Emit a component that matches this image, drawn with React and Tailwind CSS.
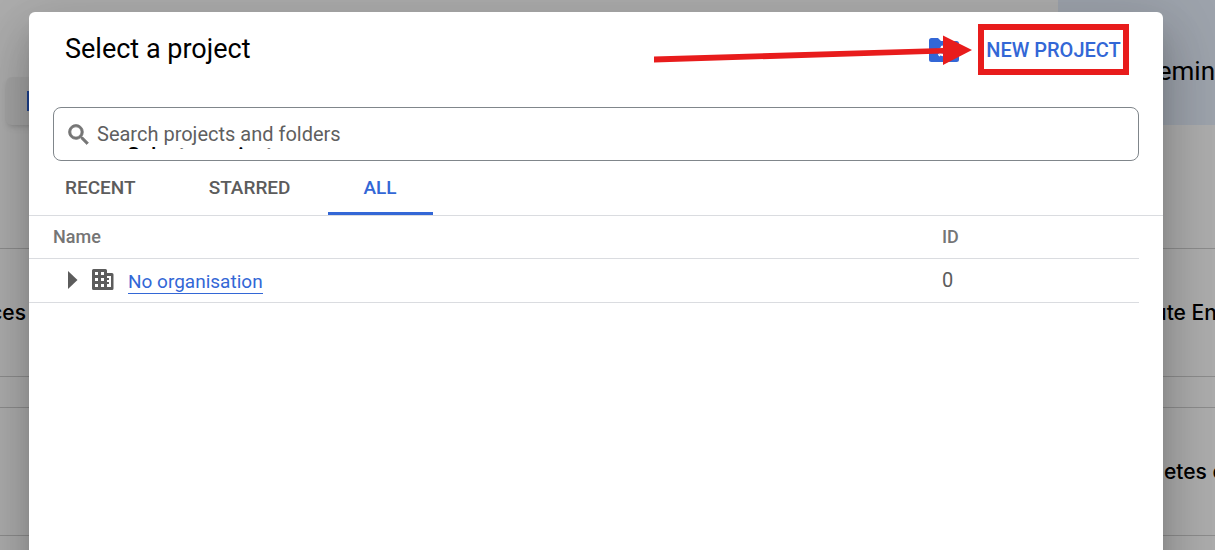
import { useState } from "react";

const tabs = ["RECENT", "STARRED", "ALL"];

const rows = [{ name: "No organisation", id: "0" }];

function ManageIcon() {
    return (
        <svg className="w-[30px] h-6" viewBox="0 0 30 24" aria-hidden="true">
            <path fill="#3367d6" d="M2.500 0H9l3 3h15.500a2.500 2.500 0 0 1 2.500 2.500v16a2.500 2.500 0 0 1-2.500 2.500h-25A2.500 2.500 0 0 1 0 21.500v-19A2.500 2.500 0 0 1 2.500 0z" />
            <circle cx="14" cy="13.500" r="3.500" fill="none" stroke="#fff" strokeWidth="2.500" />
            <circle cx="14" cy="13.500" r="5.200" fill="none" stroke="#fff" strokeWidth="1.500" strokeDasharray="2.400 3.045" />
        </svg>
    );
}

function SearchIcon() {
    return (
        <svg className="w-[21px] h-[21px] shrink-0" viewBox="2.500 2.500 18.500 18.500" fill="#757575" stroke="#757575" strokeWidth="0.700" aria-hidden="true">
            <path d="M15.500 14h-.79l-.28-.27A6.471 6.471 0 0 0 16 9.500 6.500 6.500 0 1 0 9.500 16c1.610 0 3.090-.59 4.230-1.570l.27.28v.79l5 4.990L20.490 19l-4.990-5zm-6 0C7.010 14 5 11.990 5 9.500S7.010 5 9.500 5 14 7.010 14 9.500 11.990 14 9.500 14z" />
        </svg>
    );
}

function OrganisationIcon() {
    return (
        <svg className="w-[22px] h-[22px]" viewBox="0 0 22 22" aria-hidden="true">
            <path fill="#5c5c5c" fillRule="evenodd" d="M1.500 0h12A1.500 1.500 0 0 1 15 1.500V4h5a1.500 1.500 0 0 1 1.500 1.500v14A1.500 1.500 0 0 1 20 21H1.500A1.500 1.500 0 0 1 0 19.500v-18A1.500 1.500 0 0 1 1.500 0zM3 3v3h3V3zM9 3v3h3V3zM3 9v3h3V9zM9 9v3h3V9zM3 15v3h3v-3zM9 15v3h3v-3zM15 7v2h2v2h-2v2h2v2h-2v3h4V7z" />
        </svg>
    );
}

function Card({ left, right, className }) {
    return (
        <div className={`flex justify-between items-center h-[129px] border-y border-[#d0d0d0] text-[21px] font-medium whitespace-nowrap ${className}`}>
            <span className="flex justify-end w-[26px]">{left}</span>
            <span className="flex justify-start w-[61px]">{right}</span>
        </div>
    );
}

function ConsolePage() {
    return (
        <div className="bg-white text-black font-['Inter',sans-serif]">
            <div className="flex justify-between h-[125px]">
                <div className="flex items-center self-end w-40 h-12 ml-[6px] pl-[21px] rounded-md bg-[#f4f4f4] shadow-md">
                    <span className="w-6 h-5 bg-[#2a61d6]" />
                </div>
                <div className="flex items-center justify-end w-[157px] pt-[18px] bg-[#e8f0fe] text-[26px] font-['Roboto',sans-serif]">
                    emin
                </div>
            </div>
            <Card left="ces" right="ute En" className="mt-[123px]" />
            <Card left="" right={<span className="pl-[10px]">etes c</span>} className="mt-[30px]" />
        </div>
    );
}

export default function App() {
    const [active, setActive] = useState("ALL");
    const [query, setQuery] = useState("");

    return (
        <div className="relative h-screen overflow-hidden font-['Roboto',sans-serif]">
            <ConsolePage />

            {/* backdrop and dialog */}
            <div className="absolute inset-0 flex bg-black/32 pt-3 pl-[29px] pr-[52px]">
                <div role="dialog" aria-label="Select a project" className="w-full h-[680px] rounded-md bg-white shadow-[0_14px_20px_-9px_rgba(0,0,0,0.2),0_32px_50px_4px_rgba(0,0,0,0.14),0_12px_61px_10px_rgba(0,0,0,0.12)]">
                    <div className="relative flex items-center justify-between h-[95px] pb-5 pl-9 pr-[34px]">
                        <h1 className="text-[27px] text-black">Select a project</h1>
                        <div className="flex items-center gap-[19px]">
                            <button type="button" aria-label="Manage projects">
                                <ManageIcon />
                            </button>
                            <button type="button" className="h-[51px] w-[151px] border-[6px] border-[#e81c1c] text-xl leading-6 font-medium whitespace-nowrap text-[#3367d6]">
                                NEW PROJECT
                            </button>
                        </div>
                        {/* pointer to the new project button */}
                        <svg className="absolute top-[22px] right-[191px] w-[318px] h-8" viewBox="0 0 318 32" fill="#e81c1c" aria-hidden="true">
                            <path d="M0 22.500L289 14V1.500L318 16L289 31V19.500L0 28.500z" />
                        </svg>
                    </div>

                    <label className="relative flex items-center gap-2 h-[54px] ml-6 mr-6 pl-[14px] border border-[#80868b] rounded-lg">
                        <SearchIcon />
                        <input
                            type="text"
                            aria-label="Search projects and folders"
                            placeholder="Search projects and folders"
                            value={query}
                            onChange={(e) => setQuery(e.target.value)}
                            className="flex-1 text-xl text-[#5f5f5f] placeholder:text-[#5f5f5f] outline-none"
                        />
                        {/* title scrolled under the search field */}
                        <span className="absolute left-[73px] top-[39px] h-[2px] overflow-hidden text-[21px] leading-5 font-medium text-black whitespace-nowrap" aria-hidden="true">
                            <span className="block -mt-[2px]">Select a project</span>
                        </span>
                    </label>

                    <div role="tablist" className="flex gap-px h-[55px] border-b border-[#dadce0]">
                        {tabs.map((tab) => (
                            <button
                                key={tab}
                                type="button"
                                role="tab"
                                aria-selected={active === tab}
                                onClick={() => setActive(tab)}
                                className={`px-9 pt-1 text-[19px] font-medium border-b-3 ${
                                    active === tab ? "border-[#3367d6] text-[#3367d6]" : "border-transparent text-[#5c5c5c]"
                                }`}
                            >
                                {tab}
                            </button>
                        ))}
                    </div>

                    <div className="pr-6">
                        <table className="w-full table-fixed text-left">
                            <thead>
                                <tr className="h-[42px] border-b border-[#dadce0] text-lg text-[#757575]">
                                    <th className="pl-6 font-medium">Name</th>
                                    <th className="w-[197px] font-medium">ID</th>
                                </tr>
                            </thead>
                            <tbody>
                                {rows.map((row) => (
                                    <tr key={row.name} className="h-11 border-b border-[#dadce0] text-xl text-[#5c5c5c]">
                                        <td>
                                            <div className="flex items-center pl-[39px]">
                                                <button type="button" aria-label="Expand" className="mr-[14px]">
                                                    <svg className="w-[10px] h-[18px]" viewBox="0 0 10 18" fill="#5c5c5c">
                                                        <path d="M0 0l9.500 9L0 18z" />
                                                    </svg>
                                                </button>
                                                <OrganisationIcon />
                                                <a href="#" className="ml-[14px] mt-1 leading-[23px] border-b border-[#3367d6] text-[19px] text-[#3367d6]">
                                                    {row.name}
                                                </a>
                                            </div>
                                        </td>
                                        <td>{row.id}</td>
                                    </tr>
                                ))}
                            </tbody>
                        </table>
                    </div>
                </div>
            </div>
        </div>
    );
}
